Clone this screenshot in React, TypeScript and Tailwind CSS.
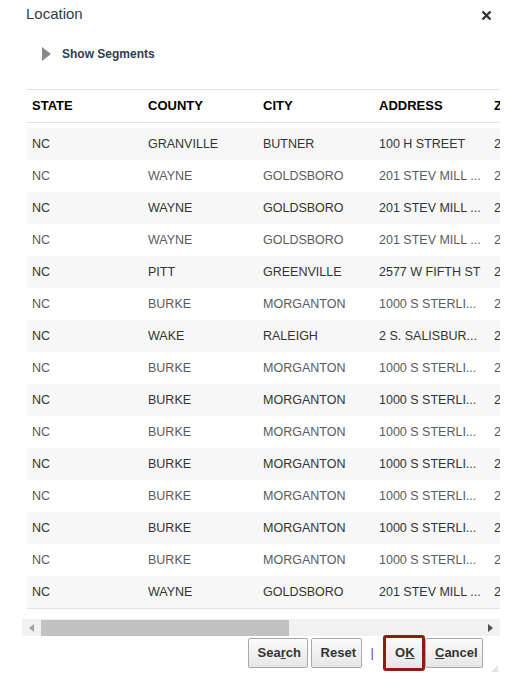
import React from "react";

type Row = { state: string; county: string; city: string; address: string; zip: string };

const rows: Row[] = [
  { state: "NC", county: "GRANVILLE", city: "BUTNER", address: "100 H STREET", zip: "27509" },
  { state: "NC", county: "WAYNE", city: "GOLDSBORO", address: "201 STEV MILL ...", zip: "27530" },
  { state: "NC", county: "WAYNE", city: "GOLDSBORO", address: "201 STEV MILL ...", zip: "27530" },
  { state: "NC", county: "WAYNE", city: "GOLDSBORO", address: "201 STEV MILL ...", zip: "27530" },
  { state: "NC", county: "PITT", city: "GREENVILLE", address: "2577 W FIFTH ST", zip: "27834" },
  { state: "NC", county: "BURKE", city: "MORGANTON", address: "1000 S STERLI...", zip: "28655" },
  { state: "NC", county: "WAKE", city: "RALEIGH", address: "2 S. SALISBUR...", zip: "27601" },
  { state: "NC", county: "BURKE", city: "MORGANTON", address: "1000 S STERLI...", zip: "28655" },
  { state: "NC", county: "BURKE", city: "MORGANTON", address: "1000 S STERLI...", zip: "28655" },
  { state: "NC", county: "BURKE", city: "MORGANTON", address: "1000 S STERLI...", zip: "28655" },
  { state: "NC", county: "BURKE", city: "MORGANTON", address: "1000 S STERLI...", zip: "28655" },
  { state: "NC", county: "BURKE", city: "MORGANTON", address: "1000 S STERLI...", zip: "28655" },
  { state: "NC", county: "BURKE", city: "MORGANTON", address: "1000 S STERLI...", zip: "28655" },
  { state: "NC", county: "BURKE", city: "MORGANTON", address: "1000 S STERLI...", zip: "28655" },
  { state: "NC", county: "WAYNE", city: "GOLDSBORO", address: "201 STEV MILL ...", zip: "27530" },
];

const cols = "grid grid-cols-[116px_115px_116px_115px_116px]";

const Btn = ({ children, className = "" }: { children: React.ReactNode; className?: string }) => (
  <button
    className={
      "h-[30px] px-[9px] border border-[#a9a9a9] rounded-[2px] bg-gradient-to-b from-[#fbfbfb] to-[#e6e6e6] text-[13px] font-bold text-[#333] " +
      className
    }
  >
    {children}
  </button>
);

export default function App() {
  return (
    <div className="w-[511px] h-[684px] bg-white overflow-hidden relative font-['Liberation_Sans',Arial,sans-serif]">
      {/* title bar */}
      <div className="flex items-center justify-between pl-[26px] pr-[19px] pt-[1px] h-[28px]">
        <span className="text-[15px] text-[#2f3d4c]">Location</span>
        <svg width="11" height="11" viewBox="0 0 11 11" className="mt-[1px]">
          <path d="M1.5 1.5 L9.5 9.5 M9.5 1.5 L1.5 9.5" stroke="#333" strokeWidth="2.4" />
        </svg>
      </div>

      {/* segments toggle */}
      <div className="flex items-center gap-[11px] pl-[42px] mt-[14px] h-[24px]">
        <svg width="9" height="14" viewBox="0 0 9 14">
          <path d="M0 0 L9 7 L0 14 Z" fill="#8a8a8a" />
        </svg>
        <span className="text-[12px] font-bold text-[#2f3d4c]">Show Segments</span>
      </div>

      {/* table */}
      <div className="ml-[27px] w-[473px] mt-[23px] overflow-hidden">
        <div className="w-[578px]">
          <div className={cols + " h-[34px] items-center border-t border-b border-[#e2e2e2] text-[13px] font-bold text-black"}>
            <div className="pl-[5px]">STATE</div>
            <div className="pl-[5px]">COUNTY</div>
            <div className="pl-[5px]">CITY</div>
            <div className="pl-[5px]">ADDRESS</div>
            <div className="pl-[5px]">ZIP CODE</div>
          </div>
          <div className="pt-[5px] border-b border-[#e2e2e2]">
            {rows.map((r, i) => (
              <div
                key={i}
                className={
                  cols +
                  " h-[32px] items-center text-[12.5px] " +
                  (i % 2 === 0 ? "bg-[#f7f7f7] text-[#333]" : "bg-white text-[#5a5a5a]")
                }
              >
                <div className="pl-[5px]">{r.state}</div>
                <div className="pl-[5px]">{r.county}</div>
                <div className="pl-[5px]">{r.city}</div>
                <div className="pl-[5px]">{r.address}</div>
                <div className="pl-[5px]">{r.zip}</div>
              </div>
            ))}
          </div>
        </div>
      </div>

      {/* horizontal scrollbar */}
      <div className="ml-[22px] w-[478px] h-[17px] mt-[10px] bg-[#f1f1f1] flex items-center">
        <div className="w-[19px] flex justify-center">
          <svg width="5" height="8" viewBox="0 0 5 8">
            <path d="M5 0 L0 4 L5 8 Z" fill="#a3a3a3" />
          </svg>
        </div>
        <div className="w-[248px] h-[16px] bg-[#c1c1c1]" />
        <div className="flex-1" />
        <div className="w-[19px] flex justify-center">
          <svg width="5" height="8" viewBox="0 0 5 8">
            <path d="M0 0 L5 4 L0 8 Z" fill="#505050" />
          </svg>
        </div>
      </div>

      {/* buttons */}
      <div className="flex items-center justify-end pr-[28px] mt-[1px] h-[31px]">
        <Btn className="w-[60px]">
          Sea<span className="underline">r</span>ch
        </Btn>
        <Btn className="w-[51px] ml-[3px]">Reset</Btn>
        <span className="mx-[9px] text-[13px] text-[#555]">|</span>
        <div className="border-[3px] border-[#8e1c10] rounded-[3px] -my-[2px]">
          <Btn className="w-[36px] border-0 h-[28px]">
            O<span className="underline">K</span>
          </Btn>
        </div>
        <Btn className="w-[58px]">
          <span className="underline">C</span>ancel
        </Btn>
      </div>

      {/* resize grip */}
      <svg className="absolute left-[490px] top-[665px]" width="8" height="8" viewBox="0 0 8 8">
        <path d="M7 1 V7 M5 3 V7 M3 5 V7 M1 7 V7" stroke="#c8c8c8" strokeWidth="1" />
      </svg>
    </div>
  );
}
